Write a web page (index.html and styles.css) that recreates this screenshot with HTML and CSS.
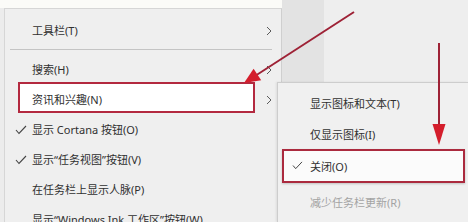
FILE: index.html
```html
<!DOCTYPE html>
<html lang="zh-CN">
<head>
<meta charset="utf-8">
<title>任务栏菜单</title>
<link rel="stylesheet" href="styles.css">
</head>
<body>
<div class="page">
  <div class="left">
    <div class="strip"></div>
    <div class="menu">
      <div class="item"><span class="label">工具栏(T)</span><svg class="chev" viewBox="0 0 6 10"><polyline points="1,1 5,5 1,9"/></svg></div>
      <div class="sep"></div>
      <div class="item"><span class="label">搜索(H)</span><svg class="chev" viewBox="0 0 6 10"><polyline points="1,1 5,5 1,9"/></svg></div>
      <div class="item hl"><span class="box"></span><span class="label">资讯和兴趣(N)</span><svg class="chev" viewBox="0 0 6 10"><polyline points="1,1 5,5 1,9"/></svg></div>
      <div class="item"><svg class="check" viewBox="0 0 12 10"><polyline points="1,5 4,8.5 11,1"/></svg><span class="label">显示 Cortana 按钮(O)</span></div>
      <div class="item"><svg class="check" viewBox="0 0 12 10"><polyline points="1,5 4,8.5 11,1"/></svg><span class="label">显示“任务视图”按钮(V)</span></div>
      <div class="item"><span class="label">在任务栏上显示人脉(P)</span></div>
      <div class="item"><span class="label">显示“Windows Ink 工作区”按钮(W)</span></div>
    </div>
  </div>
  <div class="right">
    <div class="band dark"></div>
    <div class="band light"></div>
  </div>
</div>

<div class="submenu">
  <div class="sitem s1"><span class="label">显示图标和文本(T)</span></div>
  <div class="sitem s2"><span class="label">仅显示图标(I)</span></div>
  <div class="sitem s3"><span class="sbox"></span><svg class="scheck" viewBox="0 0 12 10"><polyline points="1,5 4,8.5 11,1"/></svg><span class="label">关闭(O)</span></div>
  <div class="sitem s4 disabled"><span class="label">减少任务栏更新(R)</span></div>
</div>

<svg class="arrows" viewBox="0 0 468 222" width="468" height="222">
  <line x1="354" y1="12" x2="255" y2="76" class="aline"/>
  <polygon points="244,83 253.6,68.8 261.2,80.2" class="ahead"/>
  <line x1="439" y1="43" x2="439" y2="127" class="aline"/>
  <polygon points="439,145 432.5,124 445.5,124" class="ahead"/>
</svg>
</body>
</html>
```
FILE: styles.css
```css
* { box-sizing: border-box; }
html, body { margin: 0; padding: 0; }
body {
  width: 468px;
  height: 222px;
  overflow: hidden;
  position: relative;
  font-family: "Noto Sans", "Noto Sans CJK SC", sans-serif;
  font-size: 11px;
  color: #303030;
  background: #ececec;
}
.page {
  display: flex;
  height: 222px;
}
.left {
  width: 282px;
  display: flex;
  flex-direction: column;
}
.strip {
  flex: 0 0 8px;
  height: 8px;
  background: #fbfbf8;
}
.menu {
  flex: 1 1 auto;
  min-height: 0;
  overflow: hidden;
  margin-left: 4px;
  background: #efefef;
  border-left: 1px solid #d6d6d6;
  border-top: 1px solid #d6d6d6;
  border-right: 1px solid #cfcfcf;
  padding-top: 6px;
}
.item {
  position: relative;
  height: 30px;
  display: flex;
  align-items: center;
  padding-left: 27px;
}
.label {
  position: relative;
  white-space: nowrap;
}
.chev {
  position: absolute;
  left: 261px;
  top: 11px;
  width: 6px;
  height: 10px;
  fill: none;
  stroke: #5a5a5a;
  stroke-width: 1;
}
.sep {
  height: 9px;
  display: flex;
  align-items: center;
  margin: 0 9px 0 5px;
}
.sep::before {
  content: "";
  flex: 1;
  height: 1px;
  background: #c4c4c4;
}
.hl .box {
  position: absolute;
  left: 13px;
  top: -2px;
  width: 237px;
  height: 31px;
  background: #ffffff;
  border: 2px solid #b3293f;
}
.check {
  position: absolute;
  left: 10px;
  top: 11px;
  width: 12px;
  height: 10px;
  fill: none;
  stroke: #444;
  stroke-width: 1.1;
}
.right {
  flex: 1;
  display: flex;
}
.band.dark {
  width: 42px;
  background: #e3e3e3;
}
.band.light {
  flex: 1;
  background: #eeeeee;
}
.submenu {
  position: absolute;
  left: 277px;
  top: 82px;
  width: 191px;
  height: 140px;
  background: #f0f0f0;
  border-left: 1px solid #cdcdcd;
  border-top: 1px solid #cdcdcd;
  padding-top: 4px;
  box-shadow: -1px 0 2px rgba(0,0,0,0.08);
}
.sitem {
  position: relative;
  display: flex;
  align-items: center;
  padding-left: 32px;
}
.s1 { height: 32px; }
.s2 { height: 30px; }
.s3 { height: 34px; margin-bottom: 4px; }
.s4 { height: 30px; }
.sbox {
  position: absolute;
  left: 4px;
  top: 0;
  width: 183px;
  height: 34px;
  background: #fbfbfb;
  border: 2px solid #ab2a3e;
  box-shadow: 0 1px 2px rgba(0,0,0,0.2);
}
.scheck {
  position: absolute;
  left: 14px;
  top: 12px;
  width: 11px;
  height: 9px;
  fill: none;
  stroke: #444;
  stroke-width: 1.1;
}
.disabled { color: #a3a3a3; }
.arrows {
  position: absolute;
  left: 0;
  top: 0;
  pointer-events: none;
}
.aline {
  stroke: #9e2236;
  stroke-width: 2;
}
.ahead {
  fill: #d41e2c;
}
```
